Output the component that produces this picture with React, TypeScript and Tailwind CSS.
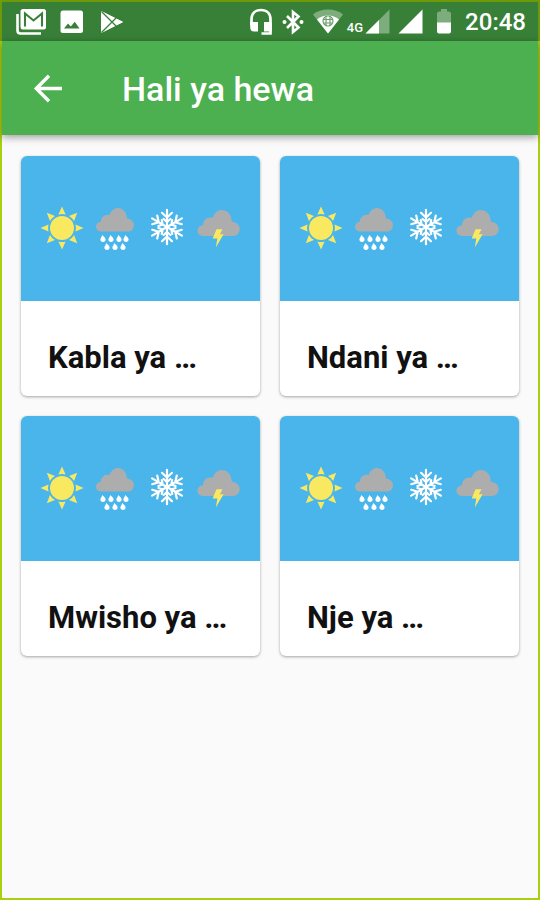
import { useId } from "react";

const periods = ["Kabla ya …", "Ndani ya …", "Mwisho ya …", "Nje ya …"];

const rays = [0, 45, 90, 135, 180, 225, 270, 315];
const arms = [0, 60, 120, 180, 240, 300];
const drops = [
  [82, 79],
  [90, 79],
  [98, 79],
  [105, 79],
  [86, 87],
  [94, 87],
  [102, 87],
];

const cloudPath =
  "M5 23.5C2 23.5 0 21.5 0 18.8C0 16 2 14 5 13.7C5 9.500 8 6.600 12 6.800C12.600 6.800 13 6.900 13.600 7C15 3 18 0 22 0C26.600 0 30.500 3.500 31 10.500C35 11 38 13.500 38 17C38 20.800 35.500 23.500 32 23.500Z";

function WeatherArt() {
  const titleId = useId();

  return (
    <svg viewBox="0 0 239 145" className="block w-full bg-[#4ab5ea]" role="img" aria-labelledby={titleId}>
      <title id={titleId}>Hali ya hewa</title>
      <g transform="translate(41 72)" fill="#f9e960">
        <circle r="12" />
        {rays.map((angle) => (
          <path key={angle} d="M0 -21.500L3.600 -13.500Q0 -14.500 -3.600 -13.500Z" transform={`rotate(${angle})`} />
        ))}
      </g>
      <path d={cloudPath} fill="#adadad" transform="translate(75 52)" />
      <g fill="#fff">
        {drops.map(([x, y]) => (
          <path
            key={`${x}-${y}`}
            d="M-.8 0C.4 1.400 2.600 2.700 2.600 4.600C2.600 6 1.500 6.900 0 6.900C-1.600 6.900 -2.600 5.900 -2.600 4.500C-2.600 3 -1 2 -.8 0Z"
            transform={`translate(${x} ${y})`}
          />
        ))}
      </g>
      <g transform="translate(146 71)" stroke="#fff" strokeWidth="2.200" fill="none" strokeLinecap="round">
        {arms.map((angle) => (
          <path key={angle} d="M0 0V-17.200M-5 -14.200L0 -9.500L5 -14.200M-3.400 -8L0 -5L3.400 -8" transform={`rotate(${angle})`} />
        ))}
      </g>
      <path d={cloudPath} fill="#adadad" transform="translate(176.500 54) scale(1.110)" />
      <path d="M195.500 73.300H201.500L198.800 78.300H202.600L194.800 91.500L196.300 82.500H191.700Z" fill="#f9e960" />
    </svg>
  );
}

function MailIcon() {
  return (
    <svg viewBox="0 0 30 26" className="h-[26px] w-[30px]" fill="none">
      <path d="M1.500 5V21.500Q1.500 24.500 4.500 24.500H25" stroke="#fff" strokeWidth="2.600" />
      <rect x="4.500" y="0" width="25.500" height="20.500" rx="2.500" fill="#fff" />
      <path d="M9 17.500V4.500L17.500 11.500L26 4.500V17.500" stroke="#388038" strokeWidth="2.100" />
    </svg>
  );
}

function ImageIcon() {
  return (
    <svg viewBox="0 0 24 24" className="size-6">
      <rect x=".5" y=".5" width="22.500" height="22.500" rx="2.500" fill="#fff" />
      <path d="M4 18.500L8 13.500L10.800 16.500L14.800 11.800L19.500 18.500Z" fill="#388038" />
    </svg>
  );
}

function PlayIcon() {
  return (
    <svg viewBox="0 0 24 24" className="size-6">
      <path d="M1.500 1.500L22.500 12L1.500 22.500Z" fill="#fff" stroke="#fff" strokeLinejoin="round" />
      <path d="M1.500 1.500L18 18M1.500 22.500L18 6" stroke="#388038" strokeWidth="1.300" />
    </svg>
  );
}

function HeadsetIcon() {
  return (
    <svg viewBox="0 0 24 28" className="h-7 w-6">
      <path d="M2.500 17V11.500C2.500 5.500 6.500 2 12 2S21.500 5.500 21.500 11.500V25.500H12.500" fill="none" stroke="#fff" strokeWidth="2.700" />
      <path d="M1.200 14H9V23.500H5Q1.200 23.500 1.200 19ZM15 14H22.800V23.500H15Z" fill="#fff" />
    </svg>
  );
}

function BluetoothIcon() {
  return (
    <svg viewBox="0 0 22 26" className="h-[26px] w-[22px]">
      <path d="M5 7L16.500 18.500L11 23V3L16.500 7.500L5 19" fill="none" stroke="#fff" strokeWidth="2.600" />
      <circle cx="2.500" cy="13" r="2" fill="#fff" />
      <circle cx="19.500" cy="13" r="2" fill="#fff" />
    </svg>
  );
}

function WifiIcon() {
  return (
    <svg viewBox="0 0 30 26" className="h-[26px] w-[30px]">
      <path d="M0 5.500C8 -1.300 22 -1.300 30 5.500L15 24.500Z" fill="#7dac7d" />
      <path d="M4 10.500C10 5 20 5 26 10.500L15 24.500Z" fill="#fff" />
      <g fill="none" stroke="#6e9f6e" strokeWidth="1.200">
        <circle cx="15" cy="12" r="5" />
        <path d="M10 10.500H20M10 14H20M13 7V17M17 7V17" />
      </g>
    </svg>
  );
}

function SignalIcon({ weak = false }: { weak?: boolean }) {
  return (
    <svg viewBox="0 0 25 25" className="size-[25px]">
      <path d="M.5 24.500L24.500 .5V24.500Z" fill={weak ? "#7dac7d" : "#fff"} />
      {weak && <path d="M.5 24.500L14 11V24.500Z" fill="#fff" />}
    </svg>
  );
}

function BatteryIcon() {
  return (
    <svg viewBox="0 0 14 25" className="h-[25px] w-3.5">
      <path d="M0 14V5Q0 2.500 2.500 2.500H4V0H10V2.500H11.500Q14 2.500 14 5V14Z" fill="#7dac7d" />
      <path d="M0 13.500H14V22.500Q14 24.500 12 24.500H2Q0 24.500 0 22.500Z" fill="#fff" />
    </svg>
  );
}

function StatusBar() {
  return (
    <div className="flex h-[41px] items-center justify-between border-x-2 border-t-2 border-[#6f9a08] bg-[#388038] pr-3 pl-3.5 text-white">
      <div className="flex items-center gap-3.5">
        <MailIcon />
        <ImageIcon />
        <div className="pl-0.5">
          <PlayIcon />
        </div>
      </div>
      <div className="flex items-center">
        <div className="flex items-center gap-[9px]">
          <HeadsetIcon />
          <BluetoothIcon />
          <WifiIcon />
        </div>
        <div className="flex items-end gap-0.5 pl-1">
          <span className="text-[13px] leading-3 font-medium">4G</span>
          <SignalIcon weak />
        </div>
        <div className="flex items-center gap-3.5 pl-2">
          <SignalIcon />
          <BatteryIcon />
          <time className="text-2xl leading-7 font-medium">20:48</time>
        </div>
      </div>
    </div>
  );
}

function PeriodCard({ label }: { label: string }) {
  return (
    <a href="#" className="block overflow-hidden rounded-md bg-white shadow-[0_1px_3px_rgba(0,0,0,0.35)]">
      <WeatherArt />
      <h2 className="truncate px-[27px] pt-[37px] pb-[18px] text-[31px] leading-10 font-bold text-[#111111]">{label}</h2>
    </a>
  );
}

export default function App() {
  return (
    <div className="flex min-h-screen flex-col bg-[#fafafa] font-['Roboto',sans-serif]">
      <StatusBar />
      <div className="flex flex-1 flex-col border-x-2 border-b-2 border-[#a8cf10]">
        <header className="flex h-[94px] items-center gap-14 bg-[#4caf50] px-7 pt-0.5 text-white shadow-[0_2px_8px_rgba(0,0,0,0.4)]">
          <button type="button" aria-label="Rudi" className="cursor-pointer">
            <svg viewBox="0 0 36 36" className="size-9" fill="none" stroke="#fff" strokeWidth="3.400">
              <path d="M32 17.500H6M19 4.800L6.300 17.500L19 30.200" />
            </svg>
          </button>
          <h1 className="text-[34px] leading-10 font-medium">Hali ya hewa</h1>
        </header>
        <main className="grid grid-cols-2 gap-5 px-[19px] py-[21px]">
          {periods.map((label) => (
            <PeriodCard key={label} label={label} />
          ))}
        </main>
      </div>
    </div>
  );
}
